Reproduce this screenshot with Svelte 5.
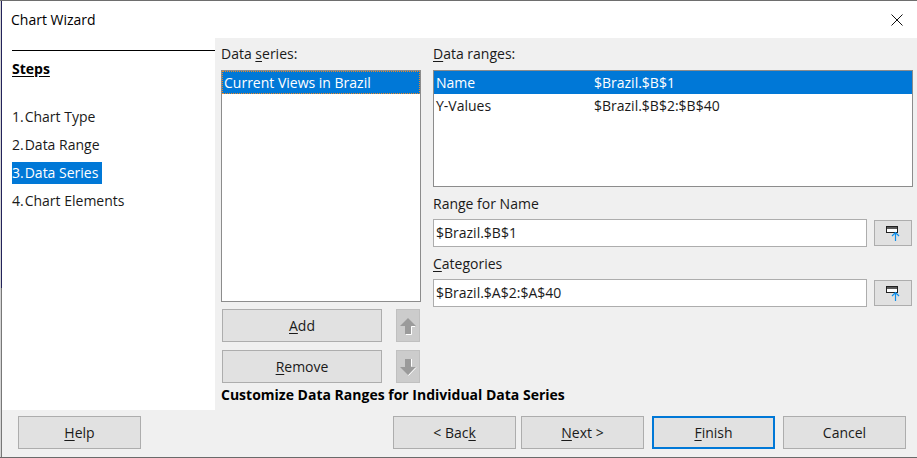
<script>
  const steps = ['Chart Type', 'Data Range', 'Data Series', 'Chart Elements'];
</script>

<div class="dialog">
  <header class="title">
    <span>Chart Wizard</span>
    <svg class="close" width="12" height="12" viewBox="0 0 12 12"><path d="M0.5 0.5L11.5 11.5M11.5 0.5L0.5 11.5" stroke="#111" fill="none"/></svg>
  </header>
  <div class="middle">
    <nav class="road">
      <div class="steps-h">Steps</div>
      <ul>
        {#each steps as s, i}
          <li><span class:sel={i === 2}><span class="num">{i + 1}.</span>{s}</span></li>
        {/each}
      </ul>
    </nav>
    <main class="page">
      <div class="cols">
        <section class="left">
          <div class="lab">Data <u>s</u>eries:</div>
          <div class="list series"><div class="row focus">Current Views in Brazil</div></div>
          <div class="act">
            <button class="btn wide"><u>A</u>dd</button>
            <button class="btn arrow" aria-label="Move up">
              <svg width="22" height="22" viewBox="0 0 22 22"><path d="M11 3L19 11H14V19H8V11H3Z" fill="#9b9b9b"/><path d="M14.5 11.5H18M14.5 11.5V19.5H9" stroke="#fff" fill="none"/></svg>
            </button>
          </div>
          <div class="act">
            <button class="btn wide"><u>R</u>emove</button>
            <button class="btn arrow" aria-label="Move down">
              <svg width="22" height="22" viewBox="0 0 22 22"><path d="M8 3H14V11H19L11 19L3 11H8Z" fill="#9b9b9b"/><path d="M14.5 3V10.5M19 11.5L11.5 19.5" stroke="#fff" fill="none"/></svg>
            </button>
          </div>
        </section>
        <section class="right">
          <div class="lab"><u>D</u>ata ranges:</div>
          <div class="list ranges">
            <div class="row sel2"><span class="c1">Name</span><span>$Brazil.$B$1</span></div>
            <div class="row"><span class="c1">Y-Values</span><span>$Brazil.$B$2:$B$40</span></div>
          </div>
          <div class="lab l2">Range for Name</div>
          <div class="field">
            <div class="input">$Brazil.$B$1</div>
            <button class="btn pick" aria-label="Select range">
              <svg width="14" height="15" viewBox="0 0 14 15"><rect x="0.5" y="0.5" width="11" height="6" fill="#fff" stroke="#222"/><rect x="1" y="1" width="10" height="2" fill="#5a5a5a"/><path d="M9.5 15V6.5M6 10L9.5 6.5L13 10" stroke="#0f8ee9" stroke-width="1.2" fill="none"/></svg>
            </button>
          </div>
          <div class="lab l3"><u>C</u>ategories</div>
          <div class="field">
            <div class="input">$Brazil.$A$2:$A$40</div>
            <button class="btn pick" aria-label="Select range">
              <svg width="14" height="15" viewBox="0 0 14 15"><rect x="0.5" y="0.5" width="11" height="6" fill="#fff" stroke="#222"/><rect x="1" y="1" width="10" height="2" fill="#5a5a5a"/><path d="M9.5 15V6.5M6 10L9.5 6.5L13 10" stroke="#0f8ee9" stroke-width="1.2" fill="none"/></svg>
            </button>
          </div>
        </section>
      </div>
      <div class="desc">Customize Data Ranges for Individual Data Series</div>
    </main>
  </div>
  <footer class="foot">
    <button class="btn b"><u>H</u>elp</button>
    <div class="fr">
      <button class="btn b">&lt; Bac<u>k</u></button>
      <button class="btn b nx"><u>N</u>ext &gt;</button>
      <button class="btn b fin"><u>F</u>inish</button>
      <button class="btn b">Cancel</button>
    </div>
  </footer>
</div>

<style>
  :global(body) { margin: 0; background: #fff; }
  .dialog {
    position: relative;
    width: 917px; height: 458px; box-sizing: border-box;
    display: flex; flex-direction: column;
    border-top: 1px solid #6e6e6e; border-bottom: 1px solid #6a6a6a;
    font-family: "Open Sans", "Noto Sans", sans-serif; font-size: 14px; color: #1a1a1a;
    background: #f0f0f0; overflow: hidden;
  }
  .dialog::after {
    content: ""; position: absolute; left: 0; top: 0; bottom: 0; width: 2px;
    background:
      linear-gradient(to bottom, #23235a 0, #23235a 287px, #777 287px) 1px 0 / 1px 100% no-repeat,
      #d4d4d4;
  }
  u { text-underline-offset: 2px; text-decoration-thickness: 1px; }
  .title {
    height: 37px; flex: none; background: #fff; display: flex; align-items: center;
    justify-content: space-between; padding: 0 14px 0 11px; font-size: 14px; color: #000;
  }
  .middle { flex: none; height: 372px; display: flex; }
  .road {
    width: 215px; flex: none; box-sizing: border-box; background: #fff; padding: 12px 0 0 12px;
  }
  .steps-h {
    border-top: 1px solid #000; height: 38px; padding-top: 8px; box-sizing: content-box;
    font-weight: 700; text-decoration: underline; text-underline-offset: 2px; line-height: 19px; color: #000;
  }
  ul { list-style: none; margin: 6px 0 0; padding: 0; }
  li { height: 28px; display: flex; align-items: center; }
  li > span { display: inline-block; height: 22px; line-height: 22px; }
  .num { margin-right: 1px; }
  .sel { background: #0078d7; color: #fff; padding-right: 4px; }
  .page { flex: 1; min-width: 0; padding: 6px 4px 0 6px; }
  .cols { display: flex; gap: 12px; height: 341px; }
  .left { width: 200px; flex: none; }
  .right { width: 480px; flex: none; }
  .lab { height: 20px; line-height: 20px; margin-bottom: 6px; white-space: nowrap; }
  .list { background: #fff; border: 1px solid #8c8c8c; box-sizing: border-box; padding: 0; width: 100%; }
  .series { height: 232px; margin-bottom: 7px; }
  .ranges { height: 117px; margin-bottom: 7px; }
  .row { height: 23px; line-height: 23px; padding-left: 2px; display: flex; white-space: nowrap; box-sizing: border-box; }
  .focus { background: #0078d7; color: #fff; outline: 1px dotted #f08a24; outline-offset: -1px; }
  .sel2 { background: #0078d7; color: #fff; }
  .c1 { width: 158px; flex: none; }
  .l2 { margin-bottom: 5px; }
  .l3 { margin-bottom: 5px; margin-top: 7px; }
  .act { display: flex; gap: 14px; margin: 0 0 8px 1px; }
  .btn {
    font: inherit; color: inherit; background: #e1e1e1; border: 1px solid #adadad; box-sizing: border-box;
    padding: 0; display: flex; align-items: center; justify-content: center;
  }
  .wide { width: 160px; height: 33px; }
  .arrow { width: 24px; height: 33px; background: #ccc; border-color: #c0c0c0; }
  .field { display: flex; gap: 7px; align-items: center; width: 479px; }
  .input {
    width: 434px; height: 28px; line-height: 26px; box-sizing: border-box; background: #fff;
    border: 1px solid #adadad; padding-left: 2px;
  }
  .pick { width: 38px; height: 26px; }
  .desc { font-weight: 700; color: #000; height: 20px; line-height: 20px; }
  .foot { flex: 1; display: flex; justify-content: space-between; align-items: flex-start; padding: 6px 11px 0 18px; }
  .fr { display: flex; gap: 8px; }
  .b { width: 123px; height: 33px; }
  .nx { margin-left: -3px; }
  .fin { border: 2px solid #0078d7; }
</style>
